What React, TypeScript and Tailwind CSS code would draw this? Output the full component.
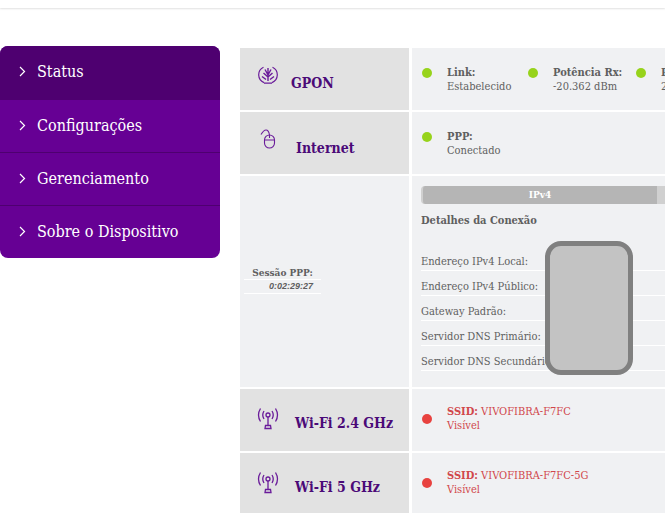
const menu = ["Status", "Configurações", "Gerenciamento", "Sobre o Dispositivo"];

const details = [
  "Endereço IPv4 Local:",
  "Endereço IPv4 Público:",
  "Gateway Padrão:",
  "Servidor DNS Primário:",
  "Servidor DNS Secundário:",
];

const font = "font-['DejaVu_Serif_Condensed','DejaVu_Serif',serif]";

const GponIcon = () => (
  <svg width="20" height="20" viewBox="0 0 20 20" fill="none" stroke="#6a1b9a" strokeWidth="1.2">
    <path d="M5.5 2.2A8.4 8.4 0 0 0 6 17.6M14.5 2.2A8.4 8.4 0 0 1 14 17.6M6 18.2h8" />
    <path d="M10 16V9M10 12L5.5 8M10 12l4.5-4M10 10L7 4.5M10 10l3-5.5M10 9V3M8 14.5L4 11.5M12 14.5l4-3" strokeWidth="1.4" />
  </svg>
);

const MouseIcon = () => (
  <svg width="16" height="20" viewBox="0 0 16 20" fill="none" stroke="#6a1b9a" strokeWidth="1.1">
    <rect x="4.5" y="6" width="10" height="13" rx="5" />
    <path d="M4.5 11h10M9.5 6v3M1 5.5C2.5 3 4 1 6 1c2 0 3 2 3.5 5" />
  </svg>
);

const AntennaIcon = () => (
  <svg width="26" height="26" viewBox="0 0 26 26" fill="none" stroke="#6a1b9a" strokeWidth="1.3">
    <circle cx="13" cy="9" r="2" />
    <path d="M13 11v9M10.5 19.5h5l.5 3h-6zM9 5q-2.500 4 0 8M17 5q2.500 4 0 8M5.500 2.500q-4 6.500 0 13M20.500 2.500q4 6.500 0 13" />
  </svg>
);

const Dot = ({ red }: { red?: boolean }) => (
  <span className={`w-[10px] h-[10px] rounded-full shrink-0 mt-[1px] ${red ? "bg-[#e8423f]" : "bg-[#97d31b]"}`} />
);

const Stat = ({ label, value, red, width }: { label: string; value: string; red?: boolean; width: string }) => (
  <div className={`flex gap-[15px] shrink-0 ${width}`}>
    <Dot red={red} />
    <div className={`text-[11px] leading-[14px] -mt-[1px] ${red ? "text-[#d1474b]" : "text-[#5f5f5f]"}`}>
      <div className="font-bold">{label}</div>
      <div>{value}</div>
    </div>
  </div>
);

const Title = ({ icon, text, gap, top }: { icon: React.ReactNode; text: string; gap: string; top: string }) => (
  <div className={`bg-[#e2e2e2] flex items-start pl-[15px] ${gap}`}>
    <div className="mt-[17px] flex justify-center w-[26px] shrink-0">{icon}</div>
    <div className={`text-[14px] font-bold text-[#4b0a78] whitespace-nowrap ${top}`}>{text}</div>
  </div>
);

const App = () => {
  return (
    <div className={`${font} relative w-[665px] h-[513px] overflow-hidden bg-white`}>
      {/* Header shadow */}
      <div className="h-[8px] bg-white shadow-[0_1px_2px_rgba(0,0,0,0.12)]" />

      <div className="flex items-start gap-[20px] pt-[38px]">
        {/* Side menu */}
        <div className="w-[220px] shrink-0 rounded-[8px] overflow-hidden bg-[#660094] mt-0">
          {menu.map((item, index) => (
            <div
              key={item}
              className={`h-[53px] flex items-center pl-[19px] gap-[11px] text-white text-[16px] ${
                index === 0 ? "bg-[#4e0070]" : "border-t border-[#4e0070]"
              }`}
            >
              <svg width="7" height="11" viewBox="0 0 7 11" fill="none" stroke="white" strokeWidth="1.2" className="mb-[2px]">
                <path d="M1 1l4.500 4.500L1 10" />
              </svg>
              <span className="mb-[1px]">{item}</span>
            </div>
          ))}
        </div>

        {/* Status table */}
        <div className="w-[445px] shrink-0 mt-[2px] grid grid-cols-[169px_273px] grid-rows-[62px_62px_211px_62px_62px] gap-[2px_3px]">
          <Title icon={<GponIcon />} text="GPON" gap="gap-[10px]" top="mt-[25px]" />
          <div className="bg-[#f0f1f3] flex pl-[10px] pt-[19px] overflow-hidden">
            <Stat label="Link:" value="Estabelecido" width="w-[106px]" />
            <Stat label="Potência Rx:" value="-20.362 dBm" width="w-[108px]" />
            <Stat label="Potência Tx:" value="2.100 dBm" width="w-[108px]" />
          </div>

          <Title icon={<MouseIcon />} text="Internet" gap="gap-[15px]" top="mt-[26px]" />
          <div className="bg-[#f0f1f3] flex pl-[10px] pt-[19px]">
            <Stat label="PPP:" value="Conectado" width="w-[200px]" />
          </div>

          <div className="bg-[#f0f1f3] flex items-center pl-[4px] pb-[4px]">
            <div className="w-[77px] text-[10px] leading-[13px] text-[#5f5f5f]">
              <div className="font-bold text-center border-b border-white pb-[0px]">Sessão PPP:</div>
              <div className="italic font-['Liberation_Sans',sans-serif] font-bold text-[9px] pl-[25px] border-b border-white whitespace-nowrap">0:02:29:27</div>
            </div>
          </div>
          <div className="bg-[#f0f1f3] pl-[9px] pt-[10px] text-[11px] text-[#5f5f5f]">
            <div className="flex h-[18px]">
              <div className="w-[236px] bg-[#b5b5b5] rounded-l-[4px] border-l-2 border-[#d0d0d0] text-white font-bold text-[10px] leading-[17px] text-center">IPv4</div>
              <div className="flex-1 bg-[#d0d0d0]" />
            </div>
            <div className="font-bold mt-[10px] leading-[14px]">Detalhes da Conexão</div>
            <div className="mt-[18px]">
              {details.map((row) => (
                <div key={row} className="h-[25px] pt-[8px] leading-[15px] border-b border-white whitespace-nowrap">
                  {row}
                </div>
              ))}
            </div>
          </div>

          <Title icon={<AntennaIcon />} text="Wi-Fi 2.4 GHz" gap="gap-[14px]" top="mt-[24px]" />
          <div className="bg-[#f0f1f3] flex pl-[10px] pt-[24px]">
            <StatLine ssid="VIVOFIBRA-F7FC" />
          </div>

          <Title icon={<AntennaIcon />} text="Wi-Fi 5 GHz" gap="gap-[14px]" top="mt-[24px]" />
          <div className="bg-[#f0f1f3] flex pl-[10px] pt-[24px]">
            <StatLine ssid="VIVOFIBRA-F7FC-5G" />
          </div>
        </div>
      </div>

      {/* Redacted block drawn over the addresses */}
      <div className="absolute left-[545px] top-[241px] w-[88px] h-[134px] rounded-[16px] bg-[#c3c3c3] border-[5px] border-[#808080]" />
    </div>
  );
};

const StatLine = ({ ssid }: { ssid: string }) => (
  <div className="flex gap-[15px]">
    <Dot red />
    <div className="text-[11px] leading-[14px] -mt-[8px] text-[#d1474b] whitespace-nowrap">
      <div>
        <span className="font-bold">SSID:</span> {ssid}
      </div>
      <div>Visível</div>
    </div>
  </div>
);

export default App;
